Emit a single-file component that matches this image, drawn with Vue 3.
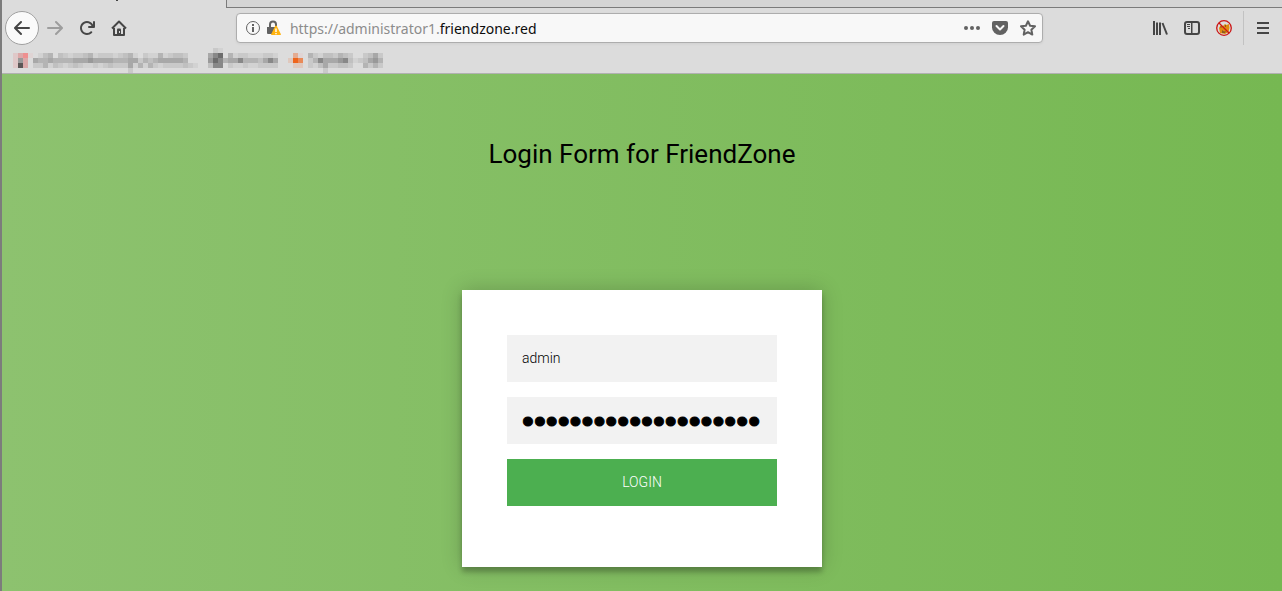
<script setup>
import { ref } from 'vue'

const user = ref('admin')
const password = ref('abcdefghijklmnopqrst')

// Bookmark labels are pixelated: each letter is one 5px cell, '.' is empty.
// a to i run from light to dark grey, the others are the favicon tints.
const shades = {
  a: '#d2d2d2', b: '#c9c9c9', c: '#c0c0c0', d: '#b4b4b4', e: '#a8a8a8',
  f: '#999999', g: '#888888', h: '#6c6c6c', i: '#5c5656',
  p: '#dfc8c8', r: '#dba8a8', s: '#ee8f8f', w: '#dfd4d4',
  o: '#ee651c', q: '#e4ac92', t: '#dfc8bd', u: '#e98a58'
}

const mosaics = [
  [
    '',
    'prsw.acd.cbabbcdabbbabcda.baadabccb',
    'pfr.eddeddddeeefeeeedddeebdcdeeeeed',
    'pir.bbdacbabcbaababcbbbeadadbabbbbcba',
    '.......................b'
  ],
  [
    '.ba',
    'egh.dabbaaabba',
    'fhgdeegdddcege',
    'cgg.baabaabbbb',
    ''
  ],
  [
    '',
    '.qw.dbaccbdcb..bceb',
    'tou.bdgeeefgcabcefd',
    '.tt.bacebbccb..dbdb',
    '.......b'
  ]
]

const bookmarks = mosaics.map((rows, i) => ({
  name: `Bookmark ${i + 1}`,
  width: Math.max(...rows.map((r) => r.length)) * 5,
  cells: rows.flatMap((row, y) =>
    [...row].flatMap((c, x) => (c === '.' ? [] : [{ x: x * 5, y: y * 5, fill: shades[c] }]))
  )
}))
</script>

<template>
  <div class="window">
    <div class="tabs">
      <div class="tab"><span class="descender"></span></div>
      <div class="strip"></div>
    </div>

    <nav class="toolbar" aria-label="Browser toolbar">
      <button class="tool back" aria-label="Back">
        <svg viewBox="0 0 16 16"><path d="M15 7H3.414l4.293-4.293a1 1 0 0 0-1.414-1.414l-6 6a1 1 0 0 0 0 1.414l6 6a1 1 0 0 0 1.414-1.414L3.414 9H15a1 1 0 0 0 0-2z" /></svg>
      </button>
      <button class="tool faded" aria-label="Forward">
        <svg viewBox="0 0 16 16"><path d="M1 7h11.586L8.293 2.707a1 1 0 0 1 1.414-1.414l6 6a1 1 0 0 1 0 1.414l-6 6a1 1 0 0 1-1.414-1.414L12.586 9H1a1 1 0 0 1 0-2z" /></svg>
      </button>
      <button class="tool" aria-label="Reload">
        <svg viewBox="0 0 16 16"><path d="M15 1a1 1 0 0 0-1 1v2.418A6.995 6.995 0 1 0 8 15a6.954 6.954 0 0 0 4.95-2.05 1 1 0 0 0-1.414-1.414A5.019 5.019 0 1 1 12.549 6H10a1 1 0 0 0 0 2h5a1 1 0 0 0 1-1V2a1 1 0 0 0-1-1z" /></svg>
      </button>
      <button class="tool" aria-label="Home">
        <svg viewBox="0 0 16 16">
          <path class="line" d="M1 8.5 8 1.500l7 7M3 8v7h10V8" />
          <path d="M6 9.500a1 1 0 0 1 1-1h2a1 1 0 0 1 1 1V15H6z" />
          <path class="hole" d="M8 11h1v2H8z" />
        </svg>
      </button>
      <div class="gap"></div>

      <div class="urlbar">
        <button class="mini" aria-label="Site information">
          <svg viewBox="0 0 16 16">
            <circle class="thin" cx="8" cy="8" r="6.5" />
            <path d="M7 7h2v5H7zM7 4h2v2H7z" />
          </svg>
        </button>
        <button class="mini" aria-label="Connection is not secure">
          <svg viewBox="0 0 16 16">
            <path class="line" d="M5 8V4.500a3 3 0 0 1 6 0V6" />
            <path d="M2 7h8v7H3a1 1 0 0 1-1-1z" />
            <path class="warn" d="M11 5.500q.5 0 .8.600l4 7.900q.4 1-.8 1H7q-1.200 0-.8-1l4-7.900q.3-.6.8-.600z" />
            <path class="mark" d="M10.300 8.500h1.400v3.500h-1.400zM10.300 13h1.400v1.200h-1.400z" />
          </svg>
        </button>
        <div class="url" role="textbox" aria-label="Address" tabindex="0">https://administrator1.<span>friendzone.red</span></div>
        <button class="mini wide" aria-label="Page actions">
          <svg viewBox="0 0 16 16"><circle cx="2" cy="8" r="2" /><circle cx="8" cy="8" r="2" /><circle cx="14" cy="8" r="2" /></svg>
        </button>
        <button class="mini wide" aria-label="Save to Pocket">
          <svg viewBox="0 0 16 16">
            <path d="M2 1h12a2 2 0 0 1 2 2v4.500a8 7.500 0 0 1-16 0V3a2 2 0 0 1 2-2z" />
            <path class="chevron" d="M4.500 6 8 9.500 11.500 6" />
          </svg>
        </button>
        <button class="mini wide" aria-label="Bookmark this page">
          <svg viewBox="0 0 16 16"><path class="star" d="M8 1.300l2.100 4.400 4.900.6-3.600 3.400.9 4.900L8 12.200l-4.300 2.400.9-4.900L1 6.300l4.900-.6z" /></svg>
        </button>
      </div>

      <div class="gap"></div>
      <button class="tool" aria-label="Library">
        <svg viewBox="0 0 16 16">
          <path d="M1 1h2v14H1zM4 2.500h2V15H4zM7 2.500h2V15H7z" />
          <path class="line" d="m10.500 3 4.500 11.500" />
        </svg>
      </button>
      <button class="tool" aria-label="Sidebars">
        <svg viewBox="0 0 16 16">
          <rect class="line" x="1" y="2" width="14" height="12" rx="2" />
          <path d="M7 2h1.500v12H7zM3 4h3v1H3zM3 6h3v1H3zM4 8h2v1H4z" />
        </svg>
      </button>
      <button class="tool" aria-label="Proxy disabled">
        <svg viewBox="0 0 16 16">
          <path class="fox" d="M3 8 4.500 5.500 7 6l2-2 1.500 1L13 4l.5 4-1 4L9 14l-5-1z" />
          <path class="fur" d="M4 6.500h2v1H4zM6 10l2 1.500 2-.5-1 2H6zM9 5h1v2H9z" />
          <circle class="ban" cx="8" cy="8" r="7.300" />
          <path class="ban" d="m3 3 10 10" />
        </svg>
      </button>
      <div class="divider"></div>
      <button class="tool" aria-label="Menu">
        <svg viewBox="0 0 16 16"><path d="M2 2h12v2H2zM2 7h12v2H2zM2 12h12v2H2z" /></svg>
      </button>
    </nav>

    <nav class="bookmarks" aria-label="Bookmarks">
      <a v-for="b in bookmarks" :key="b.name" href="#" :aria-label="b.name">
        <svg :width="b.width" height="25" shape-rendering="crispEdges">
          <rect v-for="(c, i) in b.cells" :key="i" :x="c.x" :y="c.y" width="5" height="5" :fill="c.fill" />
        </svg>
      </a>
    </nav>

    <main class="page">
      <h2>Login Form for FriendZone</h2>
      <form class="card" @submit.prevent>
        <input v-model="user" type="text" aria-label="Username" />
        <input v-model="password" class="secret" type="password" aria-label="Password" />
        <button type="submit">LOGIN</button>
      </form>
    </main>
  </div>
</template>

<style>
body {
  margin: 0;
}
</style>

<style scoped>
.window {
  box-sizing: border-box;
  min-height: 100vh;
  display: flex;
  flex-direction: column;
  border-left: 2px solid #7c7c7c;
  background: #dcdcdc;
  font-family: "Noto Sans", sans-serif;
}
svg {
  display: block;
}
button {
  padding: 0;
  border: 0;
  background: none;
}
.tabs {
  display: flex;
  height: 8px;
}
.tab {
  width: 224px;
}
.descender {
  display: block;
  width: 2px;
  height: 1px;
  margin-left: 114px;
  background: #444;
}
.strip {
  flex: 1;
  border-left: 1px solid #7b7b7b;
  border-bottom: 1px solid #7b7b7b;
  background: #d5d5d5;
}
.toolbar {
  display: flex;
  align-items: center;
  height: 40px;
  padding: 0 3px;
}
.tool {
  display: grid;
  place-items: center;
  width: 32px;
  height: 32px;
}
.tool svg,
.mini svg {
  width: 16px;
  height: 16px;
  fill: #464646;
}
.tool.back {
  box-sizing: border-box;
  width: 34px;
  height: 34px;
  border: 1px solid #a0a0a0;
  border-radius: 50%;
  background: #fafafa;
}
.tool.faded svg {
  fill: #9d9d9d;
}
.tool .line,
.mini .line {
  fill: none;
  stroke: #464646;
  stroke-width: 2;
  stroke-linejoin: round;
}
.tool .hole {
  fill: #dcdcdc;
}
.tool .fox {
  fill: #e08a10;
}
.tool .fur {
  fill: #8a5a20;
}
.tool .ban {
  fill: none;
  stroke: #cc1414;
  stroke-width: 1.3;
}
.gap {
  flex: 1;
}
.divider {
  width: 1px;
  height: 34px;
  margin: 0 3px;
  background: #c2c2c2;
}
.urlbar {
  box-sizing: border-box;
  flex: 8;
  display: flex;
  align-items: center;
  height: 30px;
  margin: 0 1px;
  padding: 0 0 0 6px;
  border: 1px solid #adadad;
  border-radius: 4px;
  background: #f8f8f8;
  box-shadow: 0 1px 3px rgba(0, 0, 0, 0.06);
}
.mini {
  display: grid;
  place-items: center;
  width: 20px;
  height: 28px;
}
.mini.wide {
  width: 28px;
}
.mini svg {
  fill: #626262;
}
.mini .line {
  stroke: #626262;
}
.mini .thin {
  fill: none;
  stroke: #626262;
  stroke-width: 1;
}
.mini .warn {
  fill: #ffb30f;
}
.mini .mark {
  fill: #fff;
}
.mini .chevron {
  fill: none;
  stroke: #f8f8f8;
  stroke-width: 2;
  stroke-linecap: round;
  stroke-linejoin: round;
}
.mini .star {
  fill: none;
  stroke: #626262;
  stroke-width: 2;
  stroke-linejoin: round;
}
.url {
  flex: 1;
  margin-left: 7px;
  padding-top: 2px;
  font-size: 14px;
  line-height: 26px;
  color: #8c8c8c;
  white-space: nowrap;
}
.url span {
  color: #0c0c0c;
}
.bookmarks {
  display: flex;
  gap: 10px;
  height: 25px;
  padding-left: 11px;
  border-bottom: 1px solid #b1b1b1;
}
.page {
  flex: 1;
  padding: 64px 16px 24px;
  background: linear-gradient(to left, #76b852, #8dc26f);
  font-family: Roboto, sans-serif;
}
h2 {
  margin: 0 0 120px;
  font-size: 26px;
  font-weight: 400;
  line-height: 32px;
  text-align: center;
  color: #000;
}
.card {
  box-sizing: border-box;
  display: flex;
  flex-direction: column;
  gap: 15px;
  max-width: 360px;
  margin: 0 auto;
  padding: 45px 45px 61px;
  background: #fff;
  box-shadow: 0 0 20px 0 rgba(0, 0, 0, 0.2), 0 5px 5px 0 rgba(0, 0, 0, 0.24);
}
.card input,
.card button {
  box-sizing: border-box;
  width: 100%;
  height: 47px;
  padding: 0 15px 2px;
  border: 0;
  border-radius: 0;
  outline: 0;
  font: 300 14px Roboto, sans-serif;
}
.card input {
  background: #f2f2f2;
  color: #000;
}
.card .secret {
  padding: 2px 15px 0;
  font: 34px "Liberation Sans", sans-serif;
  -webkit-text-stroke: 1px #000;
}
.card button {
  background: #4caf50;
  color: #fff;
}
</style>
